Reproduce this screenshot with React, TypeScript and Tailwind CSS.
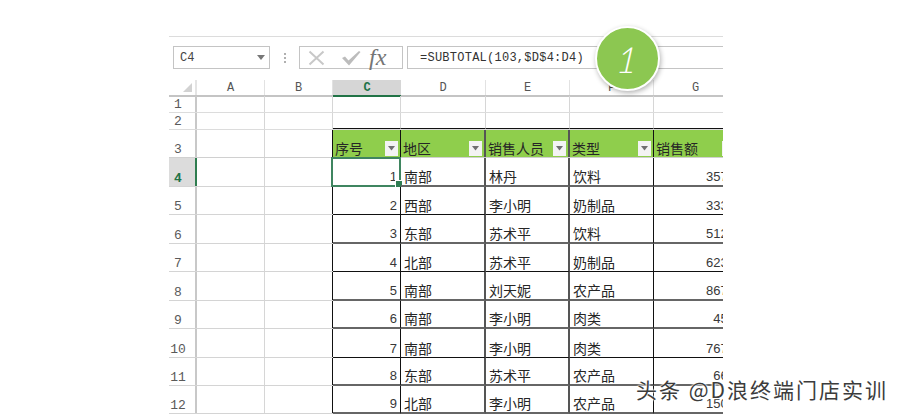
import React from "react";

const cjk = "font-['Noto_Sans_CJK_SC','Liberation_Sans',sans-serif]";
const mono = "font-['Liberation_Mono',monospace]";

const colW = ["w-[68px]", "w-[68px]", "w-[68px]", "w-[85px]", "w-[84px]", "w-[84px]", "w-[84px]"];
const letters = ["A", "B", "C", "D", "E", "F", "G"];

const rows: { n: number; h: string; line: string }[] = [
  { n: 4, h: "h-[29px]", line: "border-b-2 border-b-[#666666]" },
  { n: 5, h: "h-[28px]", line: "border-b border-b-[#111111]" },
  { n: 6, h: "h-[29px]", line: "border-b-2 border-b-[#666666]" },
  { n: 7, h: "h-[28px]", line: "border-b border-b-[#111111]" },
  { n: 8, h: "h-[29px]", line: "border-b-2 border-b-[#666666]" },
  { n: 9, h: "h-[28px]", line: "border-b-2 border-b-[#666666]" },
  { n: 10, h: "h-[29px]", line: "border-b border-b-[#111111]" },
  { n: 11, h: "h-[28px]", line: "border-b-2 border-b-[#666666]" },
  { n: 12, h: "h-[28px]", line: "border-b-2 border-b-[#666666]" },
];

const data = [
  ["1", "南部", "林丹", "饮料", "3570"],
  ["2", "西部", "李小明", "奶制品", "3330"],
  ["3", "东部", "苏术平", "饮料", "5120"],
  ["4", "北部", "苏术平", "奶制品", "6230"],
  ["5", "南部", "刘天妮", "农产品", "8670"],
  ["6", "南部", "李小明", "肉类", "450"],
  ["7", "南部", "李小明", "肉类", "7670"],
  ["8", "东部", "苏术平", "农产品", "660"],
  ["9", "北部", "李小明", "农产品", "1500"],
];

const vRight = [
  "border-r border-r-[#d6d6d6]",
  "border-r border-r-[#111111]",
  "border-r border-r-[#111111]",
  "border-r-2 border-r-[#555555]",
  "border-r-2 border-r-[#555555]",
  "border-r border-r-[#111111]",
  "",
];

function RowHead({ n, active }: { n: number; active?: boolean }) {
  return (
    <div
      className={`w-[28px] shrink-0 flex items-end justify-center pr-[8px] border-r-2 ${mono} text-[13px] leading-[15px] ${
        active
          ? "bg-[#dcdcdc] border-r-[#2e7d4f] text-[#217346] font-bold"
          : "border-r-[#c8c8c8] text-[#5a5a5a]"
      }`}
    >
      {n}
    </div>
  );
}

function Filter({ last }: { last?: boolean }) {
  return (
    <span
      className={`ml-auto ${last ? "mr-[3px]" : "mr-[2px]"} mb-[1px] w-[13px] h-[15px] shrink-0 bg-[#f3f3f3] flex items-center justify-center`}
    >
      <svg width="7" height="5" viewBox="0 0 7 5">
        <path d="M0 0h7L3.5 4.5z" fill="#6f6f6f" />
      </svg>
    </span>
  );
}

export default function App() {
  return (
    <div className="w-[900px] h-[414px] bg-white relative overflow-hidden pl-[169px] pt-[36px]">
      <div className="w-[554px] h-[378px] overflow-hidden">
        {/* toolbar */}
        <div className="border-t border-t-[#dcdcdc] pt-[9px] pl-[4px] flex h-[33px] text-[#444444]">
          <div className={`w-[97px] h-[23px] border border-[#c4c4c4] flex items-center pl-[6px] pr-[4px] ${mono} text-[12px]`}>
            <span>C4</span>
            <svg className="ml-auto" width="8" height="5" viewBox="0 0 8 5">
              <path d="M0 0h8L4 5z" fill="#777777" />
            </svg>
          </div>
          <div className="w-[29px] flex flex-col items-center justify-center gap-[2px]">
            <span className="w-[2px] h-[2px] bg-[#b0b0b0]" />
            <span className="w-[2px] h-[2px] bg-[#b0b0b0]" />
            <span className="w-[2px] h-[2px] bg-[#b0b0b0]" />
          </div>
          <div className="w-[104px] h-[23px] border border-[#c4c4c4] flex items-center pl-[8px]">
            <svg width="17" height="16" viewBox="0 0 17 16">
              <path d="M1.5 1.5 15.5 14.5M15.5 1.5 1.5 14.5" stroke="#c8c8c8" strokeWidth="2" fill="none" />
            </svg>
            <svg className="ml-[16px]" width="20" height="16" viewBox="0 0 20 16">
              <path d="M1 8l3-1.5 3.5 4L18 1l1.5 1L8 15.5z" fill="#bcbcbc" />
            </svg>
            <span className="ml-[8px] font-['Liberation_Serif',serif] italic text-[24px] leading-[21px] text-[#757575]">
              fx
            </span>
          </div>
          <div className={`ml-[4px] flex-1 h-[23px] border-y border-l border-[#c4c4c4] flex items-center pl-[12px] ${mono} text-[12px] tracking-[0.25px] text-[#333333] whitespace-nowrap`}>
            =SUBTOTAL(103,$D$4:D4)
          </div>
        </div>

        {/* sheet */}
        <div className="mt-[11px] w-[617px]">
          {/* column headers */}
          <div className="flex h-[15px] border-b-2 border-b-[#c4c4c4] box-content -mb-[1px]">
            <div className="w-[28px] shrink-0 flex items-center justify-end pr-[3px] border-r-2 border-r-[#e4e4e4]">
              <svg width="9" height="9" viewBox="0 0 9 9">
                <path d="M9 0v9H0z" fill="#d2d2d2" />
              </svg>
            </div>
            {letters.map((l, i) => (
              <div
                key={l}
                className={`${colW[i]} shrink-0 flex items-center justify-center ${mono} text-[12px] ${
                  l === "C"
                    ? "bg-[#d6d6d6] text-[#217346] font-bold border-b-2 border-b-[#217346] h-[17px]"
                    : "text-[#555555] border-r border-r-[#e2e2e2]"
                }`}
              >
                {l}
              </div>
            ))}
          </div>

          {/* rows 1 and 2 */}
          {[1, 2].map((n) => (
            <div key={n} className="flex h-[17px] border-b border-b-[#dcdcdc]">
              <RowHead n={n} />
              {letters.map((l, i) => (
                <div
                  key={l}
                  className={`${colW[i]} shrink-0 ${i < 6 ? "border-r border-r-[#d6d6d6]" : ""} ${
                    n === 2 && i >= 2 ? "border-b border-b-[#111111]" : ""
                  }`}
                />
              ))}
            </div>
          ))}

          {/* header row 3 */}
          <div className="flex h-[28px] border-b border-b-[#d0d0d0]">
            <RowHead n={3} />
            <div className="w-[68px] shrink-0 border-r border-r-[#d6d6d6]" />
            <div className="w-[68px] shrink-0 border-r border-r-[#111111]" />
            {["序号", "地区", "销售人员", "类型", "销售额"].map((t, i) => (
              <div
                key={t}
                className={`${colW[i + 2]} shrink-0 bg-[#8fce4c] flex items-end pl-[2px] ${cjk} text-[14px] leading-[17px] text-[#262626] ${vRight[i + 2]}`}
              >
                <span className="whitespace-nowrap">{t}</span>
                <Filter last={i === 4} />
              </div>
            ))}
          </div>

          {/* data */}
          {rows.map((r, idx) => (
            <div key={r.n} className={`flex ${r.h}`}>
              <div className="flex border-b border-b-[#d4d4d4]">
                <RowHead n={r.n} active={r.n === 4} />
                <div className="w-[68px] shrink-0 border-r border-r-[#d6d6d6]" />
                <div className="w-[68px] shrink-0 border-r border-r-[#111111]" />
              </div>
              {data[idx].map((v, i) => {
                const isNum = i === 0 || i === 4;
                return (
                  <div
                    key={i}
                    className={`relative ${colW[i + 2]} shrink-0 flex items-end ${r.line} ${vRight[i + 2]} ${
                      isNum
                        ? "justify-end pr-[3px] font-['Liberation_Sans',sans-serif] text-[13px] text-[#383838]"
                        : `pl-[3px] ${cjk} text-[14px] text-[#262626]`
                    } leading-[17px]`}
                  >
                    {v}
                    {r.n === 4 && i === 0 && (
                      <>
                        <span className="absolute -left-[2px] -top-[1px] w-[70px] h-[30px] border-2 border-[#3f8560]" />
                        <span className="absolute -right-[3px] -bottom-[3px] w-[6px] h-[6px] bg-[#2f7d52] border border-white box-content" />
                      </>
                    )}
                  </div>
                );
              })}
            </div>
          ))}
        </div>
      </div>

      {/* numbered callout */}
      <div className="absolute left-[595px] top-[26px] w-[65px] h-[65px] rounded-full bg-[#8cc751] border-2 border-white shadow-[1px_2px_5px_rgba(0,0,0,0.3)] flex items-center justify-center">
        <span className="font-['Lato',sans-serif] font-light italic text-[36px] leading-none text-white -skew-x-6">1</span>
      </div>

      {/* watermark */}
      <div
        className={`absolute left-[636px] top-[375px] ${cjk} text-[21px] leading-[28px] tracking-[2px] text-[#3c3c3c] whitespace-nowrap [text-shadow:0_0_2px_#fff,0_0_2px_#fff,0_0_3px_#fff]`}
      >
        头条 @D浪终端门店实训
      </div>
    </div>
  );
}
